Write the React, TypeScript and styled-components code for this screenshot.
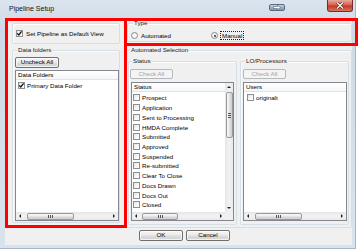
import React from 'react'
import styled, { createGlobalStyle } from 'styled-components'

const GlobalStyle = createGlobalStyle`
  html, body {
    margin: 0;
    padding: 0;
    background: #ffffff;
  }
  body {
    font-family: 'Liberation Sans', Arial, sans-serif;
    font-size: 6.2px;
    color: #000;
  }
`

const statuses = [
  'Prospect',
  'Application',
  'Sent to Processing',
  'HMDA Complete',
  'Submitted',
  'Approved',
  'Suspended',
  'Re-submitted',
  'Clear To Close',
  'Docs Drawn',
  'Docs Out',
  'Closed',
]

function CheckMark() {
  return (
    <svg width="7" height="7" viewBox="0 0 7 7">
      <path d="M1.2 3.4 L2.8 5 L5.6 1.4" fill="none" stroke="#111" strokeWidth="1.3" />
    </svg>
  )
}

function CheckItem({ label, checked }: { label: string; checked?: boolean }) {
  return (
    <>
      <CheckBox>{checked && <CheckMark />}</CheckBox>
      <span>{label}</span>
    </>
  )
}

function HScroll({ offset, size }: { offset: number; size: number }) {
  return (
    <HTrack>
      <ArrowCell>
        <Arrow $dir="left" />
      </ArrowCell>
      <ThumbLane>
        <HThumb $offset={offset} $size={size}>
          <Grip />
        </HThumb>
      </ThumbLane>
      <ArrowCell>
        <Arrow $dir="right" />
      </ArrowCell>
    </HTrack>
  )
}

function VScroll({ offset, size }: { offset: number; size: number }) {
  return (
    <VTrack>
      <ArrowCell>
        <Arrow $dir="up" />
      </ArrowCell>
      <VLane>
        <VThumb $offset={offset} $size={size}>
          <VGrip />
        </VThumb>
      </VLane>
      <ArrowCell>
        <Arrow $dir="down" />
      </ArrowCell>
    </VTrack>
  )
}

export default function App() {
  return (
    <>
      <GlobalStyle />
      <Window>
        <TitleBar>
          <Title>Pipeline Setup</Title>
          <HelpButton>
            <svg width="8" height="5" viewBox="0 0 8 5">
              <path d="M0.5 1.5 H4.5 V0.2 L7.6 2.5 L4.5 4.8 V3.5 H0.5 Z" fill="#fff" stroke="#3a4a5c" strokeWidth="0.5" />
            </svg>
          </HelpButton>
          <CloseButton>
            <svg width="8" height="7" viewBox="0 0 8 7">
              <path d="M1 0.5 L7 6.5 M7 0.5 L1 6.5" stroke="#4a1010" strokeWidth="2.4" />
              <path d="M1 0.5 L7 6.5 M7 0.5 L1 6.5" stroke="#fff" strokeWidth="1.3" />
            </svg>
          </CloseButton>
        </TitleBar>

        <Client>
          <Main>
            <LeftColumn>
              <PlainFrame>
                <CheckLine $indent={3}>
                  <CheckItem label="Set Pipeline as Default View" checked />
                </CheckLine>
              </PlainFrame>

              <Group $height={173} $padLeft={2} $padRight={0} $padBottom={1} $marginTop={6}>
                <Legend>Data folders</Legend>
                <PushButton $width={44} $marginTop={3}>
                  Uncheck All
                </PushButton>
                <ListFrame $height={151} $marginTop={2} $marginLeft={0}>
                  <ListBody>
                    <ListHeader $indent={2}>Data Folders</ListHeader>
                    <ListRows>
                      <ListRow $indent={2}>
                        <CheckItem label="Primary Data Folder" checked />
                      </ListRow>
                    </ListRows>
                  </ListBody>
                  <HScroll offset={3} size={47} />
                </ListFrame>
              </Group>
            </LeftColumn>

            <RightColumn>
              <Group $height={19} $padLeft={3} $padRight={0} $padBottom={0} $marginTop={0} $marginLeft={2}>
                <Legend>Type</Legend>
                <RadioLine>
                  <RadioOption>
                    <Radio />
                    <span>Automated</span>
                  </RadioOption>
                  <RadioOption $gap={2}>
                    <Radio $checked />
                    <FocusLabel>Manual</FocusLabel>
                  </RadioOption>
                </RadioLine>
              </Group>

              <Group $height={178} $padLeft={2} $padRight={2} $padBottom={2} $marginTop={8}>
                <Legend>Automated Selection</Legend>
                <SelectionGrid>
                  <Group $height={164} $padLeft={1} $padRight={2} $padBottom={3} $marginTop={0}>
                    <Legend>Status</Legend>
                    <PushButton $width={43} $marginTop={4} $height={10} disabled>
                      Check All
                    </PushButton>
                    <ListFrame $height={139} $marginTop={3} $marginLeft={1} $withVScroll>
                      <ListBody>
                        <ListHeader $indent={2}>Status</ListHeader>
                        <ListRows>
                          {statuses.map((s) => (
                            <ListRow key={s} $indent={1}>
                              <CheckItem label={s} />
                            </ListRow>
                          ))}
                        </ListRows>
                      </ListBody>
                      <VScroll offset={1} size={46} />
                      <HScroll offset={2} size={36} />
                      <Corner />
                    </ListFrame>
                  </Group>

                  <Group $height={164} $padLeft={2} $padRight={1} $padBottom={3} $marginTop={0}>
                    <Legend>LO/Processors</Legend>
                    <PushButton $width={43} $marginTop={4} $height={10} disabled>
                      Check All
                    </PushButton>
                    <ListFrame $height={139} $marginTop={3} $marginLeft={0}>
                      <ListBody>
                        <ListHeader $indent={2}>Users</ListHeader>
                        <ListRows>
                          <ListRow $indent={3}>
                            <CheckItem label="originalt" />
                          </ListRow>
                        </ListRows>
                      </ListBody>
                      <HScroll offset={3} size={47} />
                    </ListFrame>
                  </Group>
                </SelectionGrid>
              </Group>
            </RightColumn>
          </Main>

          <Footer>
            <PushButton $width={44} $height={11}>
              OK
            </PushButton>
            <PushButton $width={44} $height={11}>
              Cancel
            </PushButton>
          </Footer>
        </Client>

        <Highlight $left={5} $top={18} $width={122} $height={210} />
        <Highlight $left={124} $top={18} $width={234} $height={28} />
      </Window>
    </>
  )
}

const Window = styled.div`
  position: relative;
  width: 356px;
  height: 249px;
  box-sizing: border-box;
  background: linear-gradient(180deg, #dbe4ee 0%, #cdd9e6 12%, #d4dfea 60%, #d9e3ed 100%);
  border-right: 1px solid #a7b6c8;
  border-bottom: 1px solid #a7b6c8;
`

const TitleBar = styled.div`
  display: flex;
  align-items: flex-start;
  height: 18px;
`

const Title = styled.div`
  flex: 1;
  padding-left: 9px;
  line-height: 18px;
  font-size: 7px;
  color: #111;
`

const HelpButton = styled.div`
  display: flex;
  align-items: center;
  justify-content: center;
  width: 16px;
  height: 7px;
  margin-top: 4px;
  margin-right: 42px;
  border: 1px solid #5b6b80;
  border-radius: 2px;
  background: linear-gradient(180deg, #c9d3df 0%, #9fadbf 50%, #8797ad 100%);
  box-sizing: border-box;
`

const CloseButton = styled.div`
  display: flex;
  align-items: center;
  justify-content: center;
  width: 26px;
  height: 12px;
  margin-right: 2px;
  border: 1px solid #7a2a2a;
  border-top: none;
  border-radius: 0 0 3px 3px;
  background: linear-gradient(180deg, #e8a89a 0%, #d4624f 45%, #c23a26 55%, #d8765e 100%);
  box-sizing: border-box;
`

const Client = styled.div`
  display: flex;
  flex-direction: column;
  width: 347px;
  height: 227px;
  margin-left: 5px;
  background: #f0f0f0;
`

const Main = styled.div`
  display: grid;
  grid-template-columns: 108px 227px;
  column-gap: 5px;
  padding: 5px 0 0 7px;
`

const LeftColumn = styled.div`
  display: flex;
  flex-direction: column;
`

const RightColumn = styled.div`
  display: flex;
  flex-direction: column;
`

const PlainFrame = styled.div`
  display: flex;
  align-items: center;
  height: 21px;
  box-sizing: border-box;
  border: 1px solid #d5dfe5;
  border-radius: 2px;
  box-shadow: inset 1px 1px 0 #fff;
`

const CheckLine = styled.div<{ $indent: number }>`
  display: flex;
  align-items: center;
  gap: 3px;
  padding-left: ${(p) => p.$indent}px;
  white-space: nowrap;
`

const Group = styled.div<{
  $height: number
  $padLeft: number
  $padRight: number
  $padBottom: number
  $marginTop: number
  $marginLeft?: number
}>`
  display: flex;
  flex-direction: column;
  align-items: flex-start;
  height: ${(p) => p.$height}px;
  box-sizing: border-box;
  margin-top: ${(p) => p.$marginTop}px;
  margin-left: ${(p) => p.$marginLeft ?? 0}px;
  padding: 0 ${(p) => p.$padRight}px ${(p) => p.$padBottom}px ${(p) => p.$padLeft}px;
  border: 1px solid #d5dfe5;
  border-radius: 2px;
  box-shadow: inset 1px 1px 0 #fbfbfb;
`

const Legend = styled.div`
  height: 8px;
  line-height: 8px;
  margin-top: -5px;
  margin-left: 2px;
  padding: 0 1px;
  background: #f0f0f0;
  white-space: nowrap;
  color: #1a1a1a;
`

const SelectionGrid = styled.div`
  display: grid;
  grid-template-columns: 109px 109px;
  column-gap: 3px;
  margin-top: 7px;
`

const PushButton = styled.button<{ $width: number; $height?: number; $marginTop?: number }>`
  width: ${(p) => p.$width}px;
  height: ${(p) => p.$height ?? 11}px;
  margin: ${(p) => p.$marginTop ?? 0}px 0 0 0;
  padding: 0;
  box-sizing: border-box;
  font-family: inherit;
  font-size: 6.2px;
  line-height: 1;
  color: #000;
  border: 1px solid #707070;
  border-radius: 2px;
  background: linear-gradient(180deg, #f6f6f6 0%, #eaeaea 48%, #dcdcdc 52%, #d2d2d2 100%);
  box-shadow: inset 0 0 0 1px rgba(255, 255, 255, 0.7);

  &:disabled {
    color: #a3a3a3;
    border-color: #b5b9bc;
    background: #f4f4f4;
    box-shadow: none;
  }
`

const ListFrame = styled.div<{ $height: number; $marginTop: number; $marginLeft: number; $withVScroll?: boolean }>`
  display: grid;
  grid-template-columns: ${(p) => (p.$withVScroll ? '1fr 8px' : '1fr')};
  grid-template-rows: 1fr 8px;
  align-self: stretch;
  height: ${(p) => p.$height}px;
  box-sizing: border-box;
  margin-top: ${(p) => p.$marginTop}px;
  margin-left: ${(p) => p.$marginLeft}px;
  border: 1px solid #828790;
  background: #fff;
`

const ListBody = styled.div`
  display: flex;
  flex-direction: column;
  overflow: hidden;
  min-width: 0;
`

const ListHeader = styled.div<{ $indent: number }>`
  height: 8px;
  line-height: 8px;
  padding-left: ${(p) => p.$indent}px;
  border-bottom: 1px solid #e2e3e5;
  background: linear-gradient(180deg, #ffffff 0%, #f5f6f7 100%);
  white-space: nowrap;
`

const ListRows = styled.div`
  display: flex;
  flex-direction: column;
  padding-top: 1px;
`

const ListRow = styled.div<{ $indent: number }>`
  display: flex;
  align-items: center;
  gap: 2px;
  height: 9.73px;
  padding-left: ${(p) => p.$indent}px;
  white-space: nowrap;
`

const CheckBox = styled.span`
  display: inline-flex;
  align-items: center;
  justify-content: center;
  flex: none;
  width: 7px;
  height: 7px;
  box-sizing: border-box;
  border: 1px solid #8e8f8f;
  background: linear-gradient(135deg, #e4e4e4 0%, #f8f8f8 60%, #ffffff 100%);

  svg {
    margin: -1px;
  }
`

const RadioLine = styled.div`
  display: grid;
  grid-template-columns: 80px auto;
  margin-top: 4px;
`

const RadioOption = styled.div<{ $gap?: number }>`
  display: flex;
  align-items: center;
  gap: ${(p) => p.$gap ?? 3}px;
  white-space: nowrap;
`

const Radio = styled.span<{ $checked?: boolean }>`
  position: relative;
  flex: none;
  width: 7px;
  height: 7px;
  box-sizing: border-box;
  border: 1px solid #8b8b8b;
  border-radius: 50%;
  background: radial-gradient(circle at 60% 60%, #ffffff 0%, #e6e6e6 100%);

  &::after {
    content: '';
    display: ${(p) => (p.$checked ? 'block' : 'none')};
    position: absolute;
    left: 1.5px;
    top: 1.5px;
    width: 2px;
    height: 2px;
    border-radius: 50%;
    background: #2b2b2b;
  }
`

const FocusLabel = styled.span`
  padding: 0 1px;
  line-height: 7px;
  border: 1px dotted #222;
`

const HTrack = styled.div`
  grid-column: 1;
  display: grid;
  grid-template-columns: 8px 1fr 8px;
  background: linear-gradient(180deg, #e6e6e6 0%, #f2f2f2 50%, #e9e9e9 100%);
`

const VTrack = styled.div`
  grid-column: 2;
  grid-row: 1;
  display: grid;
  grid-template-rows: 8px 1fr 8px;
  background: linear-gradient(90deg, #e6e6e6 0%, #f2f2f2 50%, #e9e9e9 100%);
`

const Corner = styled.div`
  background: #f0f0f0;
`

const ArrowCell = styled.div`
  display: flex;
  align-items: center;
  justify-content: center;
`

const Arrow = styled.span<{ $dir: 'left' | 'right' | 'up' | 'down' }>`
  width: 0;
  height: 0;
  border: 2px solid transparent;
  ${(p) =>
    p.$dir === 'left'
      ? 'border-right-color: #222; border-left-width: 0;'
      : p.$dir === 'right'
      ? 'border-left-color: #222; border-right-width: 0;'
      : p.$dir === 'up'
      ? 'border-bottom-color: #222; border-top-width: 0;'
      : 'border-top-color: #222; border-bottom-width: 0;'}
`

const ThumbLane = styled.div`
  display: flex;
  align-items: stretch;
  padding: 0.5px 0;
`

const VLane = styled.div`
  display: flex;
  flex-direction: column;
  align-items: stretch;
  padding: 0 0.5px;
`

const HThumb = styled.div<{ $offset: number; $size: number }>`
  display: flex;
  align-items: center;
  justify-content: center;
  width: ${(p) => p.$size}px;
  margin-left: ${(p) => p.$offset}px;
  box-sizing: border-box;
  border: 1px solid #9a9a9a;
  border-radius: 2px;
  background: linear-gradient(180deg, #f7f7f7 0%, #ececec 45%, #dadada 55%, #d0d0d0 100%);
`

const VThumb = styled.div<{ $offset: number; $size: number }>`
  display: flex;
  align-items: center;
  justify-content: center;
  height: ${(p) => p.$size}px;
  margin-top: ${(p) => p.$offset}px;
  box-sizing: border-box;
  border: 1px solid #9a9a9a;
  border-radius: 2px;
  background: linear-gradient(90deg, #f7f7f7 0%, #ececec 45%, #dadada 55%, #d0d0d0 100%);
`

const Grip = styled.span`
  width: 5px;
  height: 3px;
  background: repeating-linear-gradient(90deg, #555 0 1px, transparent 1px 2px);
`

const VGrip = styled.span`
  width: 3px;
  height: 5px;
  background: repeating-linear-gradient(180deg, #555 0 1px, transparent 1px 2px);
`

const Footer = styled.div`
  display: flex;
  gap: 3px;
  margin-top: 2px;
  padding-left: 134px;
`

const Highlight = styled.div<{ $left: number; $top: number; $width: number; $height: number }>`
  position: absolute;
  left: ${(p) => p.$left}px;
  top: ${(p) => p.$top}px;
  width: ${(p) => p.$width}px;
  height: ${(p) => p.$height}px;
  box-sizing: border-box;
  border: 3px solid #ff0000;
  pointer-events: none;
`
